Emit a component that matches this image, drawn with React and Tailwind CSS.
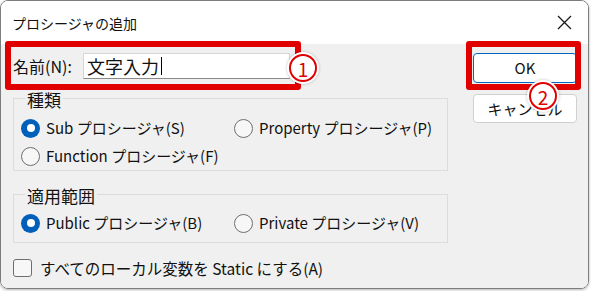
import React from "react";

function Radio({ checked, label }) {
  return (
    <label className="flex h-[28px] items-center gap-[6px]">
      {checked ? (
        <span className="flex h-[19px] w-[19px] items-center justify-center rounded-full bg-[#005fb8]">
          <span className="h-[8px] w-[8px] rounded-full bg-white" />
        </span>
      ) : (
        <span className="h-[19px] w-[19px] rounded-full border border-[#6e6e6e] bg-[#f7f7f7]" />
      )}
      <span className="text-[15px] leading-[20px]">{label}</span>
    </label>
  );
}

function Badge({ n, className }) {
  return (
    <div
      className={`absolute flex h-[28px] w-[28px] items-center justify-center rounded-full border-2 border-[#e00000] bg-white text-[19px] leading-none text-[#e00000] shadow-[0_0_0_2px_#ffffff,0_0_3px_2px_rgba(0,0,0,0.25)] ${className}`}
    >
      {n}
    </div>
  );
}

export default function App() {
  return (
    <div className="h-[291px] w-[591px] bg-white font-['Noto_Sans_CJK_JP','Noto_Sans',sans-serif] text-[#111111]">
      <div className="relative flex h-[289px] w-[589px] flex-col overflow-hidden rounded-[8px] border border-[#7d7d7d] shadow-[0_1px_3px_rgba(0,0,0,0.3)]">
        {/* title bar */}
        <div className="flex h-[43px] items-center justify-between bg-white pl-[11px] pr-[16px]">
          <span className="text-[14px] leading-[20px]">プロシージャの追加</span>
          <svg width="15" height="15" viewBox="0 0 15 15" className="text-[#1a1a1a]">
            <path d="M1 1L14 14M14 1L1 14" stroke="currentColor" strokeWidth="1.3" />
          </svg>
        </div>

        {/* body */}
        <div className="flex flex-1 bg-[#f0f0f0]">
          <div className="w-[447px] pl-[12px]">
            <div className="mt-[9px] flex h-[26px] items-center">
              <span className="w-[70px] text-[16px] leading-[20px]">名前(N):</span>
              <div className="flex h-[26px] w-[207px] items-center border border-[#d6d6d6] border-b-[#8a8a8a] bg-white pl-[3px] text-[18px] leading-[22px]">
                文字入力
                <span className="ml-[2px] h-[18px] w-px bg-black" />
              </div>
            </div>

            <fieldset className="mt-[7px] w-[435px] border border-[#dcdcdc] pb-0 pl-[7px]">
              <legend className="ml-[4px] px-[2px] pt-[4px] text-[17px] leading-[20px]">種類</legend>
              <div className="mt-[4px] grid grid-cols-[213px_1fr]">
                <Radio checked label="Sub プロシージャ(S)" />
                <Radio label="Property プロシージャ(P)" />
                <Radio label="Function プロシージャ(F)" />
              </div>
            </fieldset>

            <fieldset className="mt-[11px] w-[435px] border border-[#dcdcdc] pb-[5px] pl-[7px]">
              <legend className="ml-[4px] px-[2px] pt-[4px] text-[17px] leading-[20px]">適用範囲</legend>
              <div className="mt-[3px] grid grid-cols-[213px_1fr]">
                <Radio checked label="Public プロシージャ(B)" />
                <Radio label="Private プロシージャ(V)" />
              </div>
            </fieldset>

            <label className="mt-[11px] flex h-[28px] items-center gap-[8px]">
              <span className="h-[18px] w-[19px] rounded-[3px] border border-[#6e6e6e] bg-[#f7f7f7]" />
              <span className="text-[15.5px] leading-[20px]">すべてのローカル変数を Static にする(A)</span>
            </label>
          </div>

          <div className="ml-[25px] mt-[9px] flex w-[104px] flex-col gap-[11px]">
            <button className="h-[30px] rounded-[4px] border border-[#0067c0] bg-white text-[15px] leading-[20px]">
              OK
            </button>
            <button className="h-[29px] rounded-[4px] border border-[#d0d0d0] bg-white text-[15px] leading-[20px]">
              キャンセル
            </button>
          </div>
        </div>

        {/* annotations */}
        <div className="absolute left-[4px] top-[40px] h-[49px] w-[296px] rounded-[3px] border-[6px] border-[#e00000]" />
        <div className="absolute left-[465px] top-[40px] h-[49px] w-[115px] rounded-[3px] border-[6px] border-[#e00000]" />
        <Badge n="1" className="left-[288px] top-[53px]" />
        <Badge n="2" className="left-[528px] top-[81px]" />
      </div>
    </div>
  );
}
